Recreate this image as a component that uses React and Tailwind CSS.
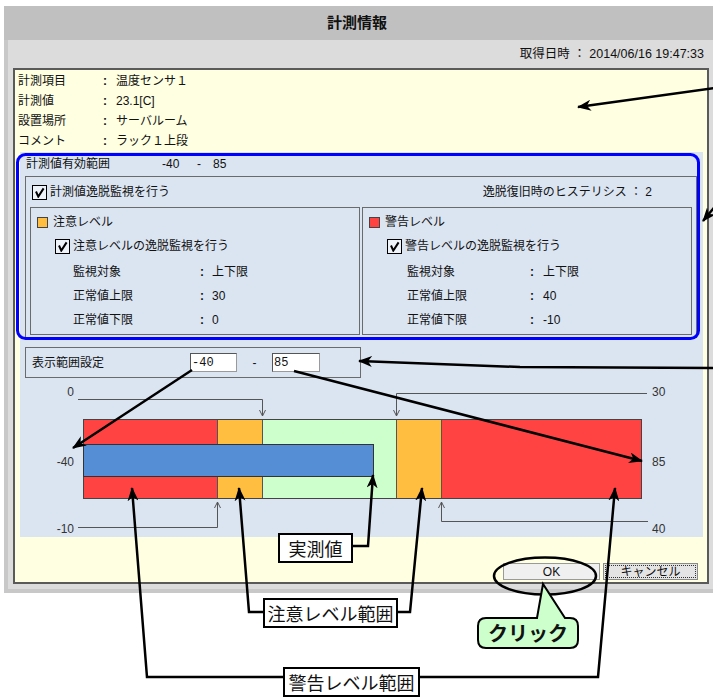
import React from "react";

const Check = () => (
  <span className="flex h-[15px] w-[15px] shrink-0 items-center justify-center border border-black bg-[#eef3f9]">
    <svg width="11" height="11" viewBox="0 0 11 11">
      <path d="M2,4.5 L4.3,9.6 L9.6,1.4" fill="none" stroke="#000" strokeWidth="2" />
    </svg>
  </span>
);

const LevelBox = ({ square, title, check, rows, pad, labelW, colonW }) => (
  <div className="h-[128px] w-[330px] border border-[#6b6b6b]">
    <div className="flex h-[28px] items-center gap-[5px] pl-[6px]">
      <span className={`h-[11px] w-[11px] border border-[#444] ${square}`} />
      <span>{title}</span>
    </div>
    <div className="flex h-[20px] items-center gap-[3px] pl-[24px]">
      <Check />
      <span>{check}</span>
    </div>
    <div className={`mt-[4px] ${pad}`}>
      {rows.map(([k, v]) => (
        <div key={k} className="flex h-[24px] items-center">
          <span className={labelW}>{k}</span>
          <span className={`${colonW} font-bold`}>:</span>
          <span>{v}</span>
        </div>
      ))}
    </div>
  </div>
);

const Chart = () => {
  const chev = (x, y, up) =>
    up ? `M${x - 3},${y + 6} L${x},${y} L${x + 3},${y + 6}` : `M${x - 3},${y - 6} L${x},${y} L${x + 3},${y - 6}`;
  return (
    <svg width="683" height="159" viewBox="0 0 683 159" className="block">
      <rect x="63" y="41" width="134" height="80" fill="#ff4343" />
      <rect x="197" y="41" width="45" height="80" fill="#ffbe40" />
      <rect x="242" y="41" width="134" height="80" fill="#ccffcc" />
      <rect x="376" y="41" width="45" height="80" fill="#ffbe40" />
      <rect x="421" y="41" width="201" height="80" fill="#ff4343" />
      <g stroke="#555" strokeWidth="1">
        <line x1="197.5" y1="41" x2="197.5" y2="121" />
        <line x1="242.5" y1="41" x2="242.5" y2="121" />
        <line x1="376.5" y1="41" x2="376.5" y2="121" />
        <line x1="421.5" y1="41" x2="421.5" y2="121" />
      </g>
      <rect x="63.5" y="41.5" width="558" height="79" fill="none" stroke="#444" />
      <rect x="63.5" y="66.5" width="290" height="32" fill="#558ed5" stroke="#333" />
      <g stroke="#555" strokeWidth="1" fill="none">
        <path d="M58,21.5 L242.5,21.5 L242.5,38" />
        <path d={chev(242.5, 38, false)} />
        <path d="M58,149.5 L197.5,149.5 L197.5,124" />
        <path d={chev(197.5, 124, true)} />
        <path d="M627,15.5 L376.5,15.5 L376.5,38" />
        <path d={chev(376.5, 38, false)} />
        <path d="M628,143.5 L421.5,143.5 L421.5,124" />
        <path d={chev(421.5, 124, true)} />
      </g>
      <g fill="#333" fontSize="12" fontFamily="Liberation Sans, sans-serif">
        <text x="54" y="18" textAnchor="end">0</text>
        <text x="54" y="88" textAnchor="end">-40</text>
        <text x="54" y="155" textAnchor="end">-10</text>
        <text x="632" y="18">30</text>
        <text x="632" y="88">85</text>
        <text x="632" y="155">40</text>
      </g>
    </svg>
  );
};

const Overlay = () => (
  <svg width="713" height="698" viewBox="0 0 713 698" className="pointer-events-none absolute left-0 top-0">
    <defs>
      <marker id="ah" viewBox="0 0 14 11" refX="13" refY="5.5" markerWidth="14" markerHeight="11" markerUnits="userSpaceOnUse" orient="auto">
        <path d="M0,0 L14,5.5 L0,11 L4,5.5 z" fill="#000" />
      </marker>
    </defs>
    <rect x="17.5" y="154.5" width="681" height="184" rx="8" fill="none" stroke="#0000ff" strokeWidth="3" />
    <g stroke="#000" strokeWidth="2.5" fill="none" markerEnd="url(#ah)">
      <path d="M715,88 L578,107" />
      <path d="M722,198 L703,221" />
      <path d="M715,368 L520,367 L359,361" />
      <path d="M192,370 L73,448" />
      <path d="M294,371 L642,461" />
      <path d="M353,546 L368,546 L373,475" />
      <path d="M263,612 L249,612 L239,488" />
      <path d="M398,612 L410,612 L422,488" />
      <path d="M283,677 L147,677 L132,488" />
      <path d="M420,677 L598,677 L615,488" />
    </g>
    <ellipse cx="545" cy="576" rx="51" ry="18.5" fill="none" stroke="#000" strokeWidth="2.5" />
    <path
      d="M486,618 L537,618 L543,584 L565,618 L570,618 Q578,618 578,626 L578,640 Q578,648 570,648 L486,648 Q478,648 478,640 L478,626 Q478,618 486,618 Z"
      fill="#ccffcc"
      stroke="#000"
      strokeWidth="2"
    />
  </svg>
);

const App = () => {
  const info = [
    ["計測項目", "温度センサ１"],
    ["計測値", "23.1[C]"],
    ["設置場所", "サーバルーム"],
    ["コメント", "ラック１上段"],
  ];

  return (
    <div className="relative h-[698px] w-[713px] overflow-hidden bg-white pl-[4px] pt-[6px] font-['Liberation_Sans','Noto_Sans_CJK_JP',sans-serif] text-[12px] text-[#111]">
      <div className="w-[716px] bg-[#c8c8c8] pb-[4px]">
        <div className="flex h-[34px] items-center justify-center bg-[#c0c0c0] pr-[10px] text-[15px] font-bold">
          計測情報
        </div>
        <div className="ml-[4px] bg-[#dcdcdc] pb-[5px]">
          <div className="flex h-[28px] items-center justify-end pr-[16px] text-[12.5px]">
            取得日時 ： 2014/06/16 19:47:33
          </div>
          <div className="ml-[5px] box-border h-[516px] w-[696px] border-2 border-[#5a5a5a] bg-[#ffffe1] pl-[3px] pt-[1px]">
            {info.map(([k, v]) => (
              <div key={k} className="flex h-[20px] items-center">
                <span className="w-[85px]">{k}</span>
                <span className="w-[13px] font-bold">:</span>
                <span>{v}</span>
              </div>
            ))}

            <div className="ml-[2px] mt-[1px] h-[385px] w-[683px] bg-[#dbe5f1]">
              <div className="flex h-[24px] items-center pl-[6px]">
                <span className="w-[136px]">計測値有効範囲</span>
                <span className="w-[35px]">-40</span>
                <span className="w-[16px]">-</span>
                <span>85</span>
              </div>

              <div className="ml-[5px] w-[672px] border border-[#6b6b6b] pb-[2px]">
                <div className="flex h-[30px] items-center justify-between pl-[6px] pr-[44px]">
                  <div className="flex items-center gap-[3px]">
                    <Check />
                    <span>計測値逸脱監視を行う</span>
                  </div>
                  <span>逸脱復旧時のヒステリシス ： 2</span>
                </div>
                <div className="flex gap-[2px] pl-[4px]">
                  <LevelBox
                    square="bg-[#ffbe40]"
                    title="注意レベル"
                    check="注意レベルの逸脱監視を行う"
                    rows={[
                      ["監視対象", "上下限"],
                      ["正常値上限", "30"],
                      ["正常値下限", "0"],
                    ]}
                    pad="pl-[42px]"
                    labelW="w-[127px]"
                    colonW="w-[12px]"
                  />
                  <LevelBox
                    square="bg-[#ff4343]"
                    title="警告レベル"
                    check="警告レベルの逸脱監視を行う"
                    rows={[
                      ["監視対象", "上下限"],
                      ["正常値上限", "40"],
                      ["正常値下限", "-10"],
                    ]}
                    pad="pl-[44px]"
                    labelW="w-[123px]"
                    colonW="w-[13px]"
                  />
                </div>
              </div>

              <div className="ml-[5px] mt-[9px] flex h-[31px] w-[336px] items-center border border-[#6b6b6b] pl-[6px]">
                <span className="w-[158px]">表示範囲設定</span>
                <span className="flex h-[19px] w-[47px] items-center border border-[#9a9a9a] border-l-[#555] border-t-[#555] bg-white pl-[1px] font-['Liberation_Mono',monospace]">
                  -40
                </span>
                <span className="w-[35px] text-center">-</span>
                <span className="flex h-[19px] w-[48px] items-center border border-[#9a9a9a] border-l-[#555] border-t-[#555] bg-white pl-[1px] font-['Liberation_Mono',monospace]">
                  85
                </span>
              </div>

              <Chart />
            </div>

            <div className="mt-[26px] flex justify-end gap-[3px] pr-[9px]">
              <button className="flex h-[17px] w-[97px] items-center justify-center border border-[#9a9a9a] bg-[#f0f0f0] text-[12px]">
                OK
              </button>
              <button className="flex h-[17px] w-[95px] items-center justify-center border border-[#8a8a8a] bg-[#e4e4e4] p-[1px] text-[12px]">
                <span className="flex h-full w-full items-center justify-center border border-dotted border-[#333]">
                  キャンセル
                </span>
              </button>
            </div>
          </div>
        </div>
      </div>

      <Overlay />

      <div className="absolute left-[278px] top-[533px] flex h-[30px] w-[75px] items-center justify-center border-2 border-black bg-white font-['Noto_Sans_CJK_JP',sans-serif] text-[18px]">
        実測値
      </div>
      <div className="absolute left-[263px] top-[598px] flex h-[30px] w-[135px] items-center justify-center border-2 border-black bg-white font-['Noto_Sans_CJK_JP',sans-serif] text-[18px]">
        注意レベル範囲
      </div>
      <div className="absolute left-[283px] top-[667px] flex h-[30px] w-[137px] items-center justify-center border-2 border-black bg-white font-['Noto_Sans_CJK_JP',sans-serif] text-[18px]">
        警告レベル範囲
      </div>
      <div className="absolute left-[478px] top-[618px] flex h-[30px] w-[100px] items-center justify-center font-['Noto_Sans_CJK_JP',sans-serif] text-[20px] font-bold">
        クリック
      </div>
    </div>
  );
};

export default App;
